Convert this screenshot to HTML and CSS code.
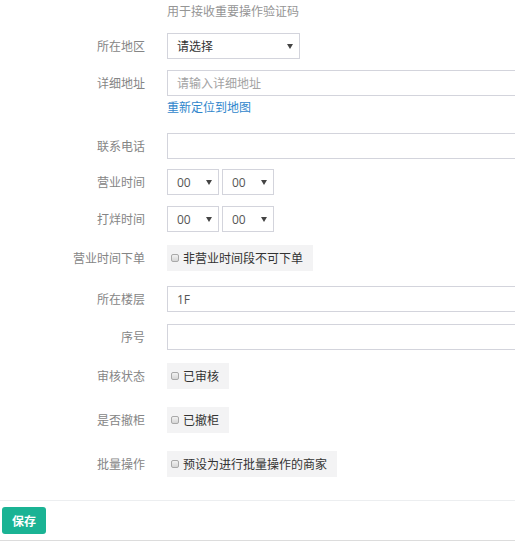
FILE: index.html
```html
<!DOCTYPE html>
<html lang="zh-CN">
<head>
<meta charset="utf-8">
<title>商家信息</title>
<link rel="stylesheet" href="styles.css">
</head>
<body>
<div class="page">
  <div class="row help-row">
    <div class="label"></div>
    <div class="help">用于接收重要操作验证码</div>
  </div>

  <div class="row gap-11">
    <div class="label">所在地区</div>
    <div class="select select-wide"><span class="select-text">请选择</span><span class="caret"></span></div>
  </div>

  <div class="row gap-3">
    <div class="label">详细地址</div>
    <div class="input placeholder">请输入详细地址</div>
  </div>
  <div class="row gap-17">
    <div class="label"></div>
    <a class="link" href="#">重新定位到地图</a>
  </div>

  <div class="row gap-10">
    <div class="label">联系电话</div>
    <div class="input"></div>
  </div>

  <div class="row gap-11">
    <div class="label">营业时间</div>
    <div class="pair">
      <div class="select select-small"><span class="select-text num">00</span><span class="caret"></span></div>
      <div class="select select-small"><span class="select-text num">00</span><span class="caret"></span></div>
    </div>
  </div>

  <div class="row gap-13">
    <div class="label">打烊时间</div>
    <div class="pair">
      <div class="select select-small"><span class="select-text num">00</span><span class="caret"></span></div>
      <div class="select select-small"><span class="select-text num">00</span><span class="caret"></span></div>
    </div>
  </div>

  <div class="row gap-15">
    <div class="label">营业时间下单</div>
    <label class="check"><span class="box"></span>非营业时间段不可下单</label>
  </div>

  <div class="row gap-12">
    <div class="label">所在楼层</div>
    <div class="input value">1F</div>
  </div>

  <div class="row gap-13">
    <div class="label">序号</div>
    <div class="input"></div>
  </div>

  <div class="row gap-18">
    <div class="label">审核状态</div>
    <label class="check"><span class="box"></span>已审核</label>
  </div>

  <div class="row gap-18">
    <div class="label">是否撤柜</div>
    <label class="check"><span class="box"></span>已撤柜</label>
  </div>

  <div class="row gap-23">
    <div class="label">批量操作</div>
    <label class="check"><span class="box"></span>预设为进行批量操作的商家</label>
  </div>

  <div class="divider"></div>
  <div class="actions">
    <button class="btn-save" type="button">保存</button>
  </div>
  <div class="bottom-line"></div>
</div>
</body>
</html>
```

FILE: styles.css
```css
html, body {
  margin: 0;
  padding: 0;
  background: #ffffff;
}

body {
  font-family: "Open Sans", "Noto Sans CJK SC", sans-serif;
  font-size: 12px;
  color: #676a6c;
  overflow: hidden;
}

.page {
  width: 515px;
  height: 541px;
  overflow: hidden;
  display: flex;
  flex-direction: column;
}

.row {
  display: flex;
  align-items: center;
  gap: 22px;
}

.help-row {
  padding-top: 3px;
  margin-bottom: 13px;
}

.gap-3 { margin-bottom: 3px; }
.gap-10 { margin-bottom: 10px; }
.gap-11 { margin-bottom: 11px; }
.gap-12 { margin-bottom: 12px; }
.gap-13 { margin-bottom: 13px; }
.gap-15 { margin-bottom: 15px; }
.gap-17 { margin-bottom: 17px; }
.gap-18 { margin-bottom: 18px; }
.gap-23 { margin-bottom: 23px; }

.label {
  flex: 0 0 145px;
  text-align: right;
  color: #858585;
  line-height: 17px;
}

.help {
  color: #959595;
  line-height: 17px;
}

.link {
  color: #2f86cc;
  text-decoration: none;
  line-height: 17px;
}

.input,
.select {
  box-sizing: border-box;
  height: 26px;
  border: 1px solid #d3d4dc;
  background: #fff;
  display: flex;
  align-items: center;
  padding-left: 9px;
}

.input {
  flex: 0 0 400px;
  color: #555;
}

.placeholder {
  color: #a3a3a3;
}

.value {
  color: #555;
}

.select {
  position: relative;
  color: #333;
}

.select-wide {
  width: 133px;
}

.select-small {
  width: 52px;
}

.select-text.num {
  color: #555;
}

.caret {
  position: absolute;
  right: 6px;
  top: 10px;
  width: 0;
  height: 0;
  border-left: 3px solid transparent;
  border-right: 3px solid transparent;
  border-top: 5px solid #444;
}

.pair {
  display: flex;
  gap: 3px;
}

.check {
  box-sizing: border-box;
  height: 26px;
  display: flex;
  align-items: center;
  gap: 4px;
  padding: 0 10px 0 3px;
  background: #f3f3f4;
  color: #333;
}

.box {
  box-sizing: border-box;
  width: 8px;
  height: 8px;
  margin-left: 1px;
  border: 1px solid #a9a9a9;
  border-radius: 2px;
  background: linear-gradient(#f2f2f2, #d6d6d6);
}

.divider {
  height: 1px;
  background: #eceef0;
  margin-bottom: 6px;
}

.actions {
  display: flex;
  padding-left: 2px;
  margin-bottom: 6px;
}

.btn-save {
  box-sizing: border-box;
  height: 27px;
  width: 44px;
  padding: 0;
  border: none;
  border-radius: 3px;
  background: #1ab394;
  color: #fff;
  font-family: "Open Sans", "Noto Sans CJK SC", sans-serif;
  font-size: 12px;
  font-weight: bold;
}

.bottom-line {
  height: 1px;
  background: #dcdcdc;
}
```
